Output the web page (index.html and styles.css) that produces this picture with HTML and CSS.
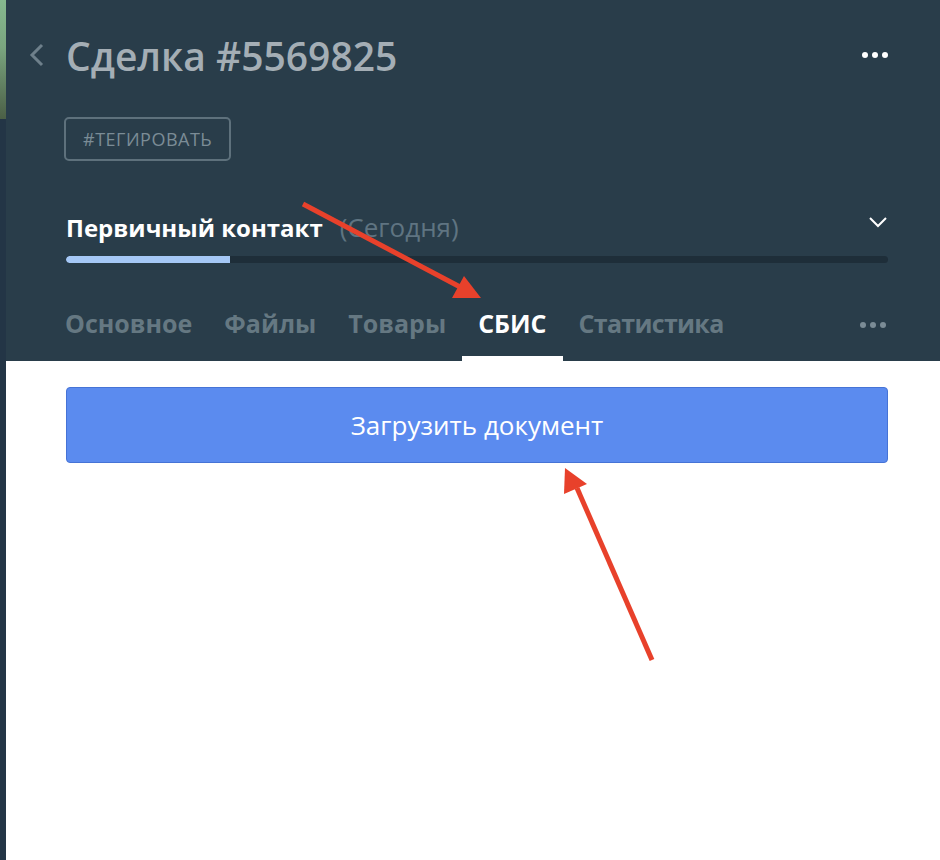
FILE: index.html
```html
<!DOCTYPE html>
<html lang="ru">
<head>
  <meta charset="UTF-8" />
  <meta name="viewport" content="width=device-width, initial-scale=1.0"/>
  <title>Сделка #5569825</title>
  <link rel="stylesheet" href="styles.css">
</head>
<body>

  <div class="side-strip">
    <div class="side-photo"></div>
  </div>

  <div class="main">
    <div class="card-header">

      <div class="title-row">
        <span class="back-btn">
          <svg width="16" height="24" viewBox="0 0 16 24">
            <path d="M13 2 L3 12 L13 22" fill="none" stroke="#6e808b" stroke-width="3"/>
          </svg>
        </span>
        <h1 class="deal-title">Сделка #5569825</h1>
        <span class="more-dots white">
          <i></i><i></i><i></i>
        </span>
      </div>

      <button class="tag-btn">#ТЕГИРОВАТЬ</button>

      <div class="stage-row">
        <span class="stage-name">Первичный контакт</span>
        <span class="stage-date">(Сегодня)</span>
        <svg class="stage-toggle" width="18" height="11" viewBox="0 0 18 11">
          <path d="M1 1 L9 9 L17 1" fill="none" stroke="#fff" stroke-width="2"/>
        </svg>
      </div>

      <div class="progress">
        <div class="progress-fill" style="width: 20%"></div>
      </div>

      <div class="tabs">
        <span class="tab">Основное</span>
        <span class="tab">Файлы</span>
        <span class="tab">Товары</span>
        <span class="tab active">СБИС</span>
        <span class="tab tab-stats">Статистика</span>
        <span class="more-dots grey">
          <i></i><i></i><i></i>
        </span>
      </div>
    </div>

    <div class="tab-body">
      <button class="upload-btn">Загрузить документ</button>
    </div>
  </div>

  <!-- annotation arrows over the screenshot -->
  <svg class="arrows" width="940" height="860" viewBox="0 0 940 860">
    <line x1="303" y1="204" x2="462" y2="288" stroke="#e8412b" stroke-width="5"/>
    <polygon points="481,298 452,298 464,276" fill="#e8412b"/>
    <line x1="652" y1="660" x2="577" y2="488" stroke="#e8412b" stroke-width="5"/>
    <polygon points="565,468 564,494 587,484" fill="#e8412b"/>
  </svg>

</body>
</html>
```

FILE: styles.css
```css
body {
  margin: 0;
  display: flex;
  min-height: 860px;
  background: #fff;
  font-family: 'Open Sans', 'Noto Sans', sans-serif;
  overflow: hidden;
}

.side-strip {
  width: 6px;
  flex-shrink: 0;
  background: #233546;
}

.side-photo {
  height: 119px;
  background: linear-gradient(#86b98f, #7aa57f 40%, #4b5f46);
}

.main {
  flex: 1;
}

.card-header {
  background: #293d4a;
  padding: 0 52px 0 60px;
}

.title-row {
  display: flex;
  align-items: center;
  height: 56px;
  padding-top: 27px;
  margin-left: -37px;
}

.back-btn {
  width: 37px;
  display: flex;
  align-items: center;
}

.deal-title {
  margin: 0;
  font-size: 39px;
  font-weight: 600;
  color: #a4aeb5;
  flex: 1;
}

.more-dots {
  display: flex;
  gap: 4px;
}

.more-dots i {
  width: 6px;
  height: 6px;
  border-radius: 50%;
  background: #fff;
}

.more-dots.grey i {
  background: #7b8c96;
}

.tag-btn {
  margin-top: 34px;
  margin-left: -2px;
  height: 44px;
  padding: 0 17px;
  background: none;
  border: 2px solid #5e717c;
  border-radius: 5px;
  color: #7b8c96;
  font-family: inherit;
  font-size: 18px;
  letter-spacing: 0.5px;
}

.stage-row {
  display: flex;
  align-items: baseline;
  margin-top: 48px;
  height: 37px;
}

.stage-name {
  color: #fff;
  font-size: 24px;
  font-weight: 700;
}

.stage-date {
  margin-left: 17px;
  color: #5f7481;
  font-size: 26px;
  flex: 1;
}

.stage-toggle {
  align-self: flex-start;
  margin-top: 8px;
  margin-right: 1px;
}

.progress {
  margin-top: 10px;
  height: 7px;
  background: #1e2e39;
  border-radius: 4px;
  overflow: hidden;
}

.progress-fill {
  height: 100%;
  background: #a5c8f6;
  border-radius: 4px 0 0 4px;
}

.tabs {
  display: flex;
  align-items: center;
  margin-top: 26px;
  margin-left: -17px;
  height: 72px;
}

.tab {
  box-sizing: border-box;
  height: 72px;
  display: flex;
  align-items: center;
  padding: 0 16px;
  border-bottom: 5px solid transparent;
  color: #657882;
  font-size: 25px;
  font-weight: 700;
}

.tab-stats {
  letter-spacing: -0.7px;
}

.tab.active {
  color: #fff;
  border-bottom-color: #fff;
}

.tabs .more-dots {
  margin-left: auto;
  margin-right: 2px;
}

.tab-body {
  padding: 26px 52px 0 60px;
}

.upload-btn {
  width: 100%;
  height: 76px;
  background: #5b8bef;
  border: 1px solid #4673d6;
  border-radius: 4px;
  color: #fff;
  font-family: inherit;
  font-size: 26px;
}

.arrows {
  position: absolute;
  left: 0;
  top: 0;
  pointer-events: none;
}
```
